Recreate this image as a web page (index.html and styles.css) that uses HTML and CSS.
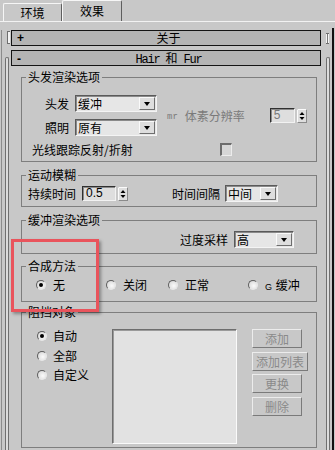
FILE: index.html
```html
<!DOCTYPE html>
<html>
<head>
<meta charset="utf-8">
<link rel="stylesheet" href="styles.css">
</head>
<body>
<div class="window">
  <div class="tabs">
    <div class="tab">环境</div>
    <div class="tab active">效果</div>
  </div>
  <div class="panel">
    <div class="gutter gutter-left">
      <div class="bracket"></div>
      <div class="track"></div>
    </div>
    <div class="rollouts">
      <div class="rhead"><span class="sign">+</span><span class="rtitle">关于</span><span></span></div>
      <div class="rhead"><span class="sign">-</span><span class="rtitle"><span class="mono">Hair </span>和<span class="mono"> Fur</span></span><span></span></div>
      <div class="rbody">
        <fieldset class="group g-hair">
          <legend>头发渲染选项</legend>
          <div class="hair-grid">
            <span class="lbl">头发</span>
            <div class="combo"><span>缓冲</span><span class="drop"></span></div>
            <div class="voxel">
              <span class="mr">mr</span><span class="dis">体素分辨率</span>
              <div class="spin">
                <span class="field dis w25">5</span>
                <svg class="arrows" width="10" height="14" viewBox="0 0 10 14"><rect x="0.5" y="0.5" width="9" height="13" fill="#dedede" stroke="#8a8a8a"/><path d="M0.5 0.5h9M0.5 0.5v13" stroke="#fafafa" fill="none"/><path d="M2.5 6h5L5 3z" fill="#000"/><path d="M2.5 8h5L5 11z" fill="#000"/></svg>
              </div>
            </div>
            <span class="lbl">照明</span>
            <div class="combo"><span>原有</span><span class="drop"></span></div>
            <span class="raytrace">光线跟踪反射/折射</span>
            <span class="check"></span>
          </div>
        </fieldset>

        <fieldset class="group g-motion">
          <legend>运动模糊</legend>
          <div class="row motion-row">
            <span>持续时间</span>
            <div class="spin spin-dur">
              <span class="field w34 num">0.5</span>
              <svg class="arrows" width="10" height="14" viewBox="0 0 10 14"><rect x="0.5" y="0.5" width="9" height="13" fill="#dedede" stroke="#8a8a8a"/><path d="M0.5 0.5h9M0.5 0.5v13" stroke="#fafafa" fill="none"/><path d="M2.5 6h5L5 3z" fill="#000"/><path d="M2.5 8h5L5 11z" fill="#000"/></svg>
            </div>
            <span class="interval">时间间隔</span>
            <div class="combo w53"><span>中间</span><span class="drop"></span></div>
          </div>
        </fieldset>

        <fieldset class="group g-buffer">
          <legend>缓冲渲染选项</legend>
          <div class="row buffer-row">
            <span>过度采样</span>
            <div class="combo w60"><span>高</span><span class="drop"></span></div>
          </div>
        </fieldset>

        <fieldset class="group g-comp">
          <legend>合成方法</legend>
          <div class="comp-row">
            <label class="ritem"><span class="radio on"></span><span>无</span></label>
            <label class="ritem"><span class="radio"></span><span>关闭</span></label>
            <label class="ritem"><span class="radio"></span><span>正常</span></label>
            <label class="ritem"><span class="radio"></span><span><span class="g">G</span> 缓冲</span></label>
          </div>
        </fieldset>

        <fieldset class="group g-block">
          <legend>阻挡对象</legend>
          <div class="block-grid">
            <div class="rcol">
              <label class="ritem"><span class="radio on"></span><span>自动</span></label>
              <label class="ritem"><span class="radio"></span><span>全部</span></label>
              <label class="ritem"><span class="radio"></span><span>自定义</span></label>
            </div>
            <div class="listbox"></div>
            <div class="bcol">
              <span class="btn w50">添加</span>
              <span class="btn w56">添加列表</span>
              <span class="btn w50">更换</span>
              <span class="btn w50">删除</span>
            </div>
          </div>
        </fieldset>
      </div>
    </div>
    <div class="gutter gutter-right">
      <div class="scol">
        <div class="bracket rb"></div>
        <div class="track"></div>
      </div>
      <div class="blackline"></div>
    </div>
  </div>
  <div class="callout"></div>
</div>
</body>
</html>
```

FILE: styles.css
```css
* { box-sizing: border-box; }
html, body { margin: 0; padding: 0; }
body {
  width: 335px;
  height: 450px;
  overflow: hidden;
  background: #c8c8c8;
  font: 12px/14px "Noto Sans CJK SC", sans-serif;
  color: #000;
}
.window {
  position: relative;
  width: 335px;
  height: 450px;
  display: flex;
  flex-direction: column;
}

/* tabs */
.tabs {
  height: 22px;
  display: flex;
  align-items: flex-start;
  padding-left: 3px;
  border-bottom: 1px solid #f2f2f2;
}
.tab {
  width: 59px;
  height: 18px;
  margin-top: 3px;
  border: 1px solid;
  border-color: #f6f6f6 #5e5e5e transparent #f6f6f6;
  border-bottom: none;
  border-radius: 2px 2px 0 0;
  text-align: center;
  line-height: 17px;
}
.tab.active {
  width: 60px;
  height: 21px;
  margin-top: 0;
  line-height: 20px;
}

/* panel */
.panel {
  flex: 1;
  display: grid;
  grid-template-columns: 11px 310px 14px;
  padding-top: 8px;
}
.gutter { display: flex; }
.gutter-left {
  flex-direction: column;
  margin-left: 1px;
  border-left: 1px solid #8c8c8c;
}
.bracket {
  width: 3px;
  height: 13px;
  margin: 1px 0 0 5px;
  border: 1px solid #6e6e6e;
  border-right: none;
  background: #f2f2f2;
}
.track {
  flex: 1;
  width: 4px;
  margin: 13px 0 0 3px;
  border: 1px solid #707070;
  border-bottom: none;
  border-radius: 2px 2px 0 0;
  background: #dcdcdc;
}
.gutter-right { flex-direction: row; }
.scol {
  display: flex;
  flex-direction: column;
  width: 9px;
  padding-left: 5px;
}
.scol .bracket.rb {
  margin: 3px 0 0 0;
  height: 11px;
  border: 1px solid #6e6e6e;
  border-left: none;
  border-right: none;
  background: linear-gradient(90deg, #f4f4f4 0 1px, #7a7a7a 1px 2px, #f4f4f4 2px);
}
.scol .track { margin: 13px 0 0 0; }
.blackline {
  width: 2px;
  margin: -2px 0 0 2px;
  background: #111;
}

/* rollouts */
.rollouts { display: flex; flex-direction: column; }
.rhead {
  height: 16px;
  border: 1px solid #141414;
  background: #b4b4b4;
  display: grid;
  grid-template-columns: 1fr auto 1fr;
  align-items: center;
  padding-left: 5px;
}
.rhead + .rhead { margin-top: 4px; }
.sign {
  font: bold 12px/14px "Liberation Sans", sans-serif;
  justify-self: start;
}
.rtitle { white-space: pre; }
.mono {
  font: 12px/14px "Liberation Mono", monospace;
  letter-spacing: -1.2px;
  white-space: pre;
}
.rbody { padding: 0 4px 0 10px; }

/* group boxes */
.group {
  margin: 0;
  padding: 0;
  min-width: 0;
  border: 1px solid #7e7e7e;
}
.group legend {
  margin-left: 4px;
  padding: 0 2px;
  line-height: 14px;
}
.g-hair { margin-top: 4px; }
.g-motion { margin-top: 6px; }
.g-buffer { margin-top: 6px; }
.g-comp { margin-top: 5px; }
.g-block { margin-top: 3px; }

.hair-grid {
  display: grid;
  grid-template-columns: 37px 82px 1fr;
  grid-template-rows: 17px 17px 14px;
  column-gap: 6px;
  row-gap: 7px;
  padding: 11px 0 4px 10px;
}
.lbl { text-align: right; align-self: center; }
.voxel {
  grid-column: 3;
  grid-row: 1 / span 2;
  display: flex;
  align-items: center;
  padding-left: 4px;
}
.mr {
  font: 9px/10px "Liberation Mono", monospace;
  color: #7a7a7a;
  margin-right: 7px;
  margin-top: 2px;
}
.dis { color: #7a7a7a; }
.voxel .spin { margin-left: 25px; }
.raytrace { grid-column: 1 / span 2; grid-row: 3; }
.check {
  grid-column: 3;
  grid-row: 3;
  width: 12px;
  height: 13px;
  margin-left: 57px;
  border: 2px solid #6c6c6c;
  border-right: 1px solid #ececec;
  border-bottom: 1px solid #ececec;
  background: #d6d6d6;
}

/* combo boxes */
.combo {
  height: 17px;
  display: flex;
  align-items: center;
  justify-content: space-between;
  background: #e6e6e6;
  border: 1px solid;
  border-color: #5a5a5a #f4f4f4 #f4f4f4 #5a5a5a;
  box-shadow: inset 1px 1px 0 #8a8a8a;
  padding-left: 2px;
}
.combo.w53 { width: 53px; }
.combo.w60 { width: 60px; }
.drop {
  width: 16px;
  height: 13px;
  margin-right: 1px;
  background: #dedede;
  border: 1px solid;
  border-color: #fafafa #6e6e6e #6e6e6e #fafafa;
  display: flex;
  align-items: center;
  justify-content: center;
}
.drop::after {
  content: "";
  border-top: 4px solid #000;
  border-left: 3.5px solid transparent;
  border-right: 3.5px solid transparent;
}

/* spinners */
.spin { display: flex; align-items: center; gap: 2px; }
.field {
  height: 15px;
  background: #dedede;
  border: 1px solid;
  border-color: #303030 #f2f2f2 #f2f2f2 #303030;
  box-shadow: inset 1px 1px 0 #8a8a8a;
  padding-left: 3px;
  font: 12px/13px "Liberation Sans", sans-serif;
}
.field.w25 { width: 25px; }
.field.w34 { width: 34px; }
.arrows { display: block; }

/* rows */
.row { display: flex; align-items: center; height: 17px; }
.motion-row { padding-left: 6px; margin: 3px 0 4px; }
.spin-dur { margin-left: 6px; }
.interval { margin-left: 44px; margin-right: 5px; }
.buffer-row { padding-left: 158px; margin: 4px 0 5px; }
.buffer-row .combo { margin-left: 6px; }

/* radios */
.ritem { display: flex; align-items: center; gap: 7px; height: 14px; }
.radio {
  width: 10px;
  height: 10px;
  border-radius: 50%;
  border: 1px solid;
  border-color: #5e5e5e #e8e8e8 #e8e8e8 #5e5e5e;
  background: radial-gradient(circle at 60% 60%, #fafafa 0, #e2e2e2 60%, #c4c4c4 100%);
  display: flex;
  align-items: center;
  justify-content: center;
}
.radio.on::after {
  content: "";
  width: 4px;
  height: 4px;
  border-radius: 50%;
  background: #000;
}
.g { font: 9px/10px "Liberation Sans", sans-serif; margin-right: 1px; }
.comp-row {
  display: grid;
  grid-template-columns: 70px 62px 80px auto;
  padding: 5px 0 9px 14px;
}

/* blocking objects */
.block-grid {
  display: grid;
  grid-template-columns: 75px 125px auto;
  column-gap: 0;
  padding: 10px 0 3px 15px;
}
.rcol { display: flex; flex-direction: column; gap: 5.5px; }
.rcol .ritem { gap: 6px; }
.listbox {
  width: 125px;
  height: 115px;
  background: #e2e2e2;
  border: 1px solid;
  border-color: #6e6e6e #fafafa #fafafa #6e6e6e;
  box-shadow: inset 1px 1px 0 #9a9a9a;
}
.bcol {
  display: flex;
  flex-direction: column;
  align-items: flex-start;
  gap: 3.5px;
  padding-left: 15px;
}
.btn {
  height: 19px;
  border: 1px solid;
  border-color: #ececec #7a7a7a #7a7a7a #ececec;
  color: #8a8a8a;
  text-align: center;
  line-height: 17px;
}
.btn.w50 { width: 50px; }
.btn.w56 { width: 56px; }

/* red callout */
.callout {
  position: absolute;
  left: 11px;
  top: 239px;
  width: 88px;
  height: 73px;
  border: 3px solid #e9545c;
  box-shadow: 2px 2px 3px rgba(0, 0, 0, 0.35);
}
```
